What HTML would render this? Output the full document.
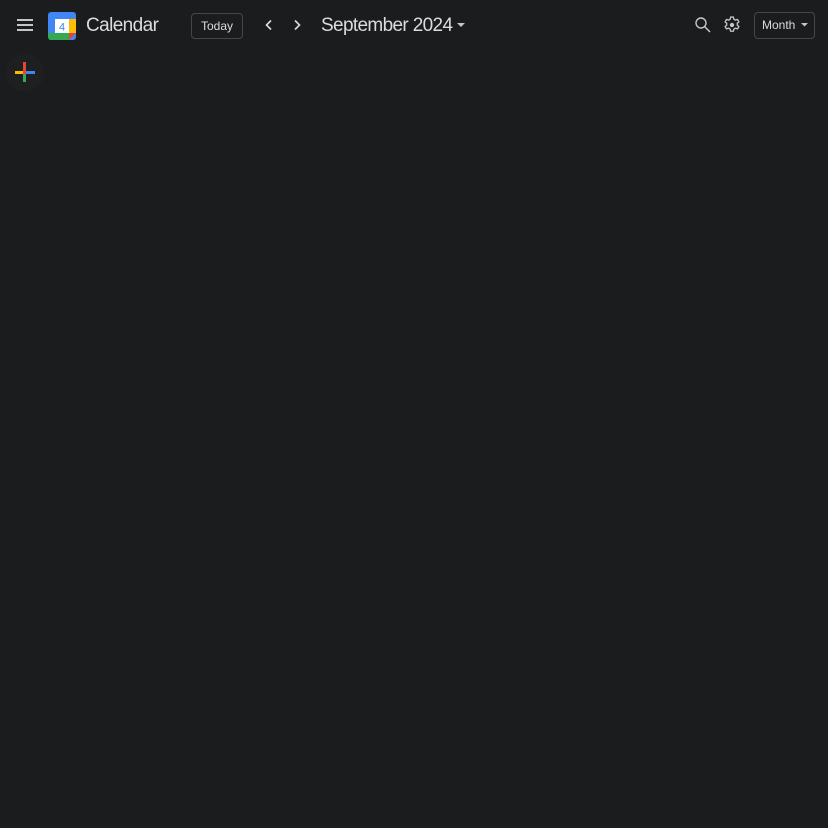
<!DOCTYPE html>
<html><head><meta charset="utf-8"><style>
html,body{margin:0;padding:0;width:828px;height:828px;background:#1b1c1e;overflow:hidden;font-family:"Liberation Sans",Arial,sans-serif;color:#dadce0}
.a{position:absolute}
</style></head><body>
<div class="a" style="left:17px;top:19px;width:16px;height:2px;background:#c4c7c5"></div>
<div class="a" style="left:17px;top:24px;width:16px;height:2px;background:#c4c7c5"></div>
<div class="a" style="left:17px;top:29px;width:16px;height:2px;background:#c4c7c5"></div>
<svg class="a" style="left:48px;top:12px" width="28" height="28" viewBox="0 0 28 28">
<rect x="0" y="0" width="28" height="28" rx="3" fill="#4285f4"/>
<rect x="21" y="7" width="7" height="14" fill="#fbbc04"/>
<path d="M0 21H21V28H3A3 3 0 0 1 0 25Z" fill="#34a853"/>
<path d="M21 21H28L21 28Z" fill="#ea4335"/>
<rect x="7" y="7" width="14" height="14" fill="#fff"/>
<text x="14" y="18.5" font-size="11" fill="#4285f4" text-anchor="middle" font-family="Liberation Sans,sans-serif">4</text>
</svg>
<div class="a" style="left:86px;top:15px;font-size:19px;letter-spacing:-0.6px;color:#dadce0">Calendar</div>
<div class="a" style="left:191px;top:13px;width:50px;height:24px;border:1px solid #444746;border-radius:4px;font-size:12px;line-height:24px;text-align:center">Today</div>
<svg class="a" style="left:262px;top:18px" width="14" height="14" viewBox="0 0 14 14"><path d="M9 2.5L4.5 7L9 11.5" stroke="#dadce0" stroke-width="1.6" fill="none"/></svg>
<svg class="a" style="left:290px;top:18px" width="14" height="14" viewBox="0 0 14 14"><path d="M5 2.5L9.5 7L5 11.5" stroke="#dadce0" stroke-width="1.6" fill="none"/></svg>
<div class="a" style="left:321px;top:15px;font-size:19px;letter-spacing:-0.65px;color:#dadce0">September 2024</div>
<svg class="a" style="left:457px;top:23px" width="8" height="5"><path d="M0 0H8L4 4Z" fill="#c4c7c5"/></svg>
<svg class="a" style="left:694px;top:16px" width="18" height="18" viewBox="0 0 18 18"><circle cx="7" cy="7" r="5" stroke="#c4c7c5" stroke-width="1.4" fill="none"/><path d="M10.5 10.5L16 16" stroke="#c4c7c5" stroke-width="1.5"/></svg>
<svg class="a" style="left:722px;top:15px" width="20" height="20" viewBox="0 0 24 24"><path fill="none" stroke="#c4c7c5" stroke-width="1.6" stroke-linejoin="round" d="M10.3 2.5h3.4l.5 2.6a7 7 0 0 1 1.9 1.1l2.5-.9 1.7 2.9-2 1.7a7 7 0 0 1 0 2.2l2 1.7-1.7 2.9-2.5-.9a7 7 0 0 1-1.9 1.1l-.5 2.6h-3.4l-.5-2.6a7 7 0 0 1-1.9-1.1l-2.5.9-1.7-2.9 2-1.7a7 7 0 0 1 0-2.2l-2-1.7 1.7-2.9 2.5.9a7 7 0 0 1 1.9-1.1z"/><circle cx="12" cy="12" r="2.6" fill="#c4c7c5"/></svg>
<div class="a" style="left:754px;top:12px;width:59px;height:25px;border:1px solid #444746;border-radius:4px;font-size:12px;line-height:25px"><span style="margin-left:7px">Month</span></div>
<svg class="a" style="left:801px;top:23px" width="7" height="4"><path d="M0 0H7L3.5 3.5Z" fill="#c4c7c5"/></svg>
<div class="a" style="left:6px;top:54px;width:38px;height:38px;border-radius:50%;background:#1e1f21"></div>
<div class="a" style="left:23px;top:62px;width:3px;height:10px;background:#ea4335"></div>
<div class="a" style="left:23px;top:73px;width:3px;height:9px;background:#34a853"></div>
<div class="a" style="left:15px;top:71px;width:9px;height:3px;background:#fbbc04"></div>
<div class="a" style="left:26px;top:71px;width:9px;height:3px;background:#4285f4"></div>
<div class="a" style="left:23px;top:71px;width:3px;height:3px;background:#ea4335"></div>
</body></html>
